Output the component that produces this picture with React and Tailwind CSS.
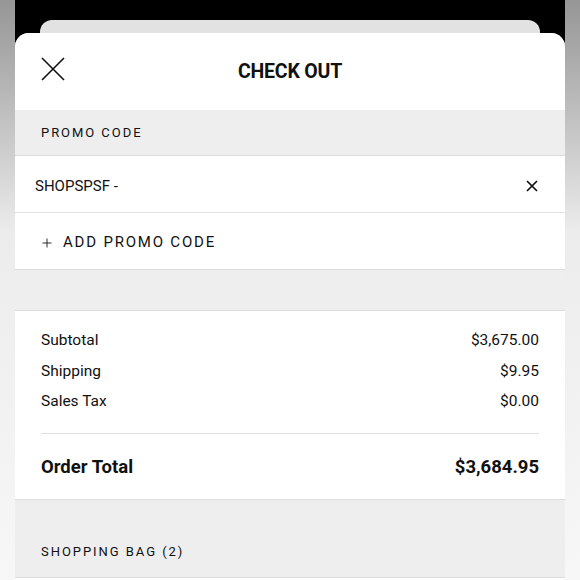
import { Plus } from 'lucide-react'

const summary = [
  { label: 'Subtotal', value: '$3,675.00' },
  { label: 'Shipping', value: '$9.95' },
  { label: 'Sales Tax', value: '$0.00' },
]

function CloseIcon({ size, stroke = 1.5 }) {
  return (
    <svg width={size} height={size} viewBox={`0 0 ${size} ${size}`} fill="none" stroke="currentColor" strokeWidth={stroke}>
      <path d={`M1 1L${size - 1} ${size - 1}M${size - 1} 1L1 ${size - 1}`} />
    </svg>
  )
}

function App() {
  return (
    <div
      className="w-[580px] h-[580px] overflow-hidden px-[15px] bg-gradient-to-b from-[#969696] via-[#ececec] via-40% to-[#f7f7f7] text-[#111]"
      style={{ fontFamily: 'Roboto, "Liberation Sans", sans-serif' }}
    >
      <div className="bg-black pt-[20px] h-full">
        <div className="mx-[25px] h-[26px] rounded-t-[12px] bg-[#e2e2e2]" />
        <div className="-mt-[13px] rounded-t-[14px] bg-[#eeeeee] overflow-hidden">
          {/* header */}
          <div className="h-[77px] bg-white flex items-center relative">
            <button className="ml-[26px] mt-[-6px] text-[#111]">
              <CloseIcon size={24} stroke={1.6} />
            </button>
            <h1 className="absolute left-0 right-0 text-center text-[19.5px] font-bold tracking-[-0.01em] pointer-events-none">
              CHECK OUT
            </h1>
          </div>

          {/* promo code */}
          <div className="h-[46px] flex items-center px-[26px] text-[13px] tracking-[0.15em] border-b border-[#dcdcdc]">
            PROMO CODE
          </div>
          <div className="h-[57px] bg-white flex items-center justify-between pl-[20px] pr-[27px] pt-[4px] border-b border-[#e2e2e2]">
            <span className="text-[15px]">SHOPSPSF -</span>
            <CloseIcon size={12} stroke={1.7} />
          </div>
          <div className="h-[57px] bg-white flex items-center gap-[9px] pl-[25px] pr-[26px] pt-[3px] border-b border-[#dcdcdc]">
            <Plus size={14} strokeWidth={1.5} />
            <span className="text-[15px] tracking-[0.12em]">ADD PROMO CODE</span>
          </div>

          <div className="h-[41px] border-b border-[#dcdcdc]" />

          {/* totals */}
          <div className="bg-white px-[26px] border-b border-[#dcdcdc]">
            <div className="pt-[20px] pb-[22px] border-b border-[#e0e0e0] flex flex-col gap-[11.5px]">
              {summary.map((row) => (
                <div key={row.label} className="flex justify-between text-[15.5px] leading-[19px]">
                  <span>{row.label}</span>
                  <span>{row.value}</span>
                </div>
              ))}
            </div>
            <div className="h-[65px] pt-[3px] flex items-center justify-between text-[18.5px] font-bold">
              <span>Order Total</span>
              <span>$3,684.95</span>
            </div>
          </div>

          <div className="h-[78px] flex items-end pb-[16px] px-[26px] text-[13px] tracking-[0.15em] border-b border-[#dcdcdc]">
            SHOPPING BAG (2)
          </div>
          <div className="h-[20px] bg-white" />
        </div>
      </div>
    </div>
  )
}

export default App
